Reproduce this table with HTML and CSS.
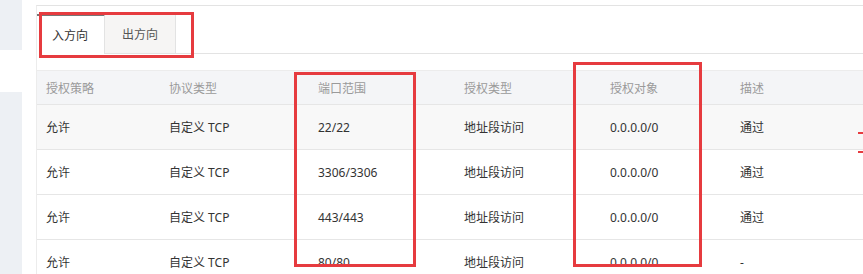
FILE: index.html
```html
<!DOCTYPE html>
<html lang="zh-CN">
<head>
  <meta charset="UTF-8">
  <meta name="viewport" content="width=device-width, initial-scale=1.0">
  <title>安全组规则</title>
  <link rel="stylesheet" href="styles.css">
</head>
<body>
  <!-- Left nav strip -->
  <aside class="side">
    <div class="side-block side-top"></div>
    <div class="side-block side-rest"></div>
  </aside>

  <main class="panel">
    <!-- Direction tabs -->
    <div class="tabs">
      <div class="tab active">入方向</div>
      <div class="tab">出方向</div>
      <div class="mark mark-tabs"></div>
    </div>

    <!-- Rules table -->
    <div class="rules">
      <div class="row head">
        <div class="cell">授权策略</div>
        <div class="cell">协议类型</div>
        <div class="cell">端口范围</div>
        <div class="cell">授权类型</div>
        <div class="cell">授权对象</div>
        <div class="cell">描述</div>
      </div>
      <div class="row hover">
        <div class="cell">允许</div>
        <div class="cell">自定义 TCP</div>
        <div class="cell">22/22</div>
        <div class="cell">地址段访问</div>
        <div class="cell">0.0.0.0/0</div>
        <div class="cell">通过</div>
      </div>
      <div class="row">
        <div class="cell">允许</div>
        <div class="cell">自定义 TCP</div>
        <div class="cell">3306/3306</div>
        <div class="cell">地址段访问</div>
        <div class="cell">0.0.0.0/0</div>
        <div class="cell">通过</div>
      </div>
      <div class="row">
        <div class="cell">允许</div>
        <div class="cell">自定义 TCP</div>
        <div class="cell">443/443</div>
        <div class="cell">地址段访问</div>
        <div class="cell">0.0.0.0/0</div>
        <div class="cell">通过</div>
      </div>
      <div class="row">
        <div class="cell">允许</div>
        <div class="cell">自定义 TCP</div>
        <div class="cell">80/80</div>
        <div class="cell">地址段访问</div>
        <div class="cell">0.0.0.0/0</div>
        <div class="cell">-</div>
      </div>

      <!-- highlight frames -->
      <div class="mark mark-port"></div>
      <div class="mark mark-target"></div>
      <div class="tick tick-a"></div>
      <div class="tick tick-b"></div>
    </div>
  </main>
</body>
</html>
```

FILE: styles.css
```css
body {
  margin: 0;
  height: 274px;
  overflow: hidden;
  background: #fff;
  font-family: "Noto Sans", "Noto Sans CJK SC", sans-serif;
  font-size: 12px;
  color: #333;
  display: flex;
  gap: 14px;
}

/* Left nav strip */
.side {
  width: 22px;
  flex: none;
  display: flex;
  flex-direction: column;
}

.side-block {
  background: #edf0f4;
}

.side-top {
  height: 50px;
  margin-bottom: 42px;
}

.side-rest {
  flex: 1;
}

/* Main panel */
.panel {
  flex: 1;
  margin-top: 5px;
  border-top: 1px solid #e3e3e3;
  border-left: 1px solid #ececec;
}

/* Tabs */
.tabs {
  position: relative;
  display: flex;
  margin-top: 8px;
  height: 39px;
  border-bottom: 1px solid #e3e3e3;
}

.tab {
  display: flex;
  align-items: center;
  padding: 0 17px;
  color: #555;
  background: #f6f5f4;
  border-right: 1px solid #e3e3e3;
  border-top: 1px solid #e3e3e3;
}

.tab.active {
  padding: 0 15px;
  width: 37px;
  color: #333;
  background: #fff;
  border-top: 2px solid #777;
  margin-bottom: -1px;
}

/* Rules table */
.rules {
  position: relative;
  margin-top: 16px;
}

.row {
  display: grid;
  grid-template-columns: 123px 149px 146px 146px 130px 1fr;
  height: 44px;
  align-items: center;
  border-bottom: 1px solid #e6e6e6;
}

.row.head {
  height: 33px;
  background: #f4f5f7;
  color: #9a9a9a;
  border-top: 1px solid #ececec;
}

.row.hover {
  background: #f8f8f8;
}

.cell {
  padding-left: 9px;
  white-space: nowrap;
}

/* Red highlight frames */
.mark {
  position: absolute;
  border: 3px solid #e63b3f;
  box-sizing: border-box;
  pointer-events: none;
}

.mark-tabs {
  left: 2px;
  top: -2px;
  width: 155px;
  height: 46px;
}

.mark-port {
  left: 257px;
  top: 2px;
  width: 122px;
  height: 195px;
}

.mark-target {
  left: 536px;
  top: -8px;
  width: 129px;
  height: 205px;
}

.tick {
  position: absolute;
  right: 0;
  width: 5px;
  height: 2px;
  background: #e63b3f;
}

.tick-a {
  top: 62px;
}

.tick-b {
  top: 81px;
}
```
